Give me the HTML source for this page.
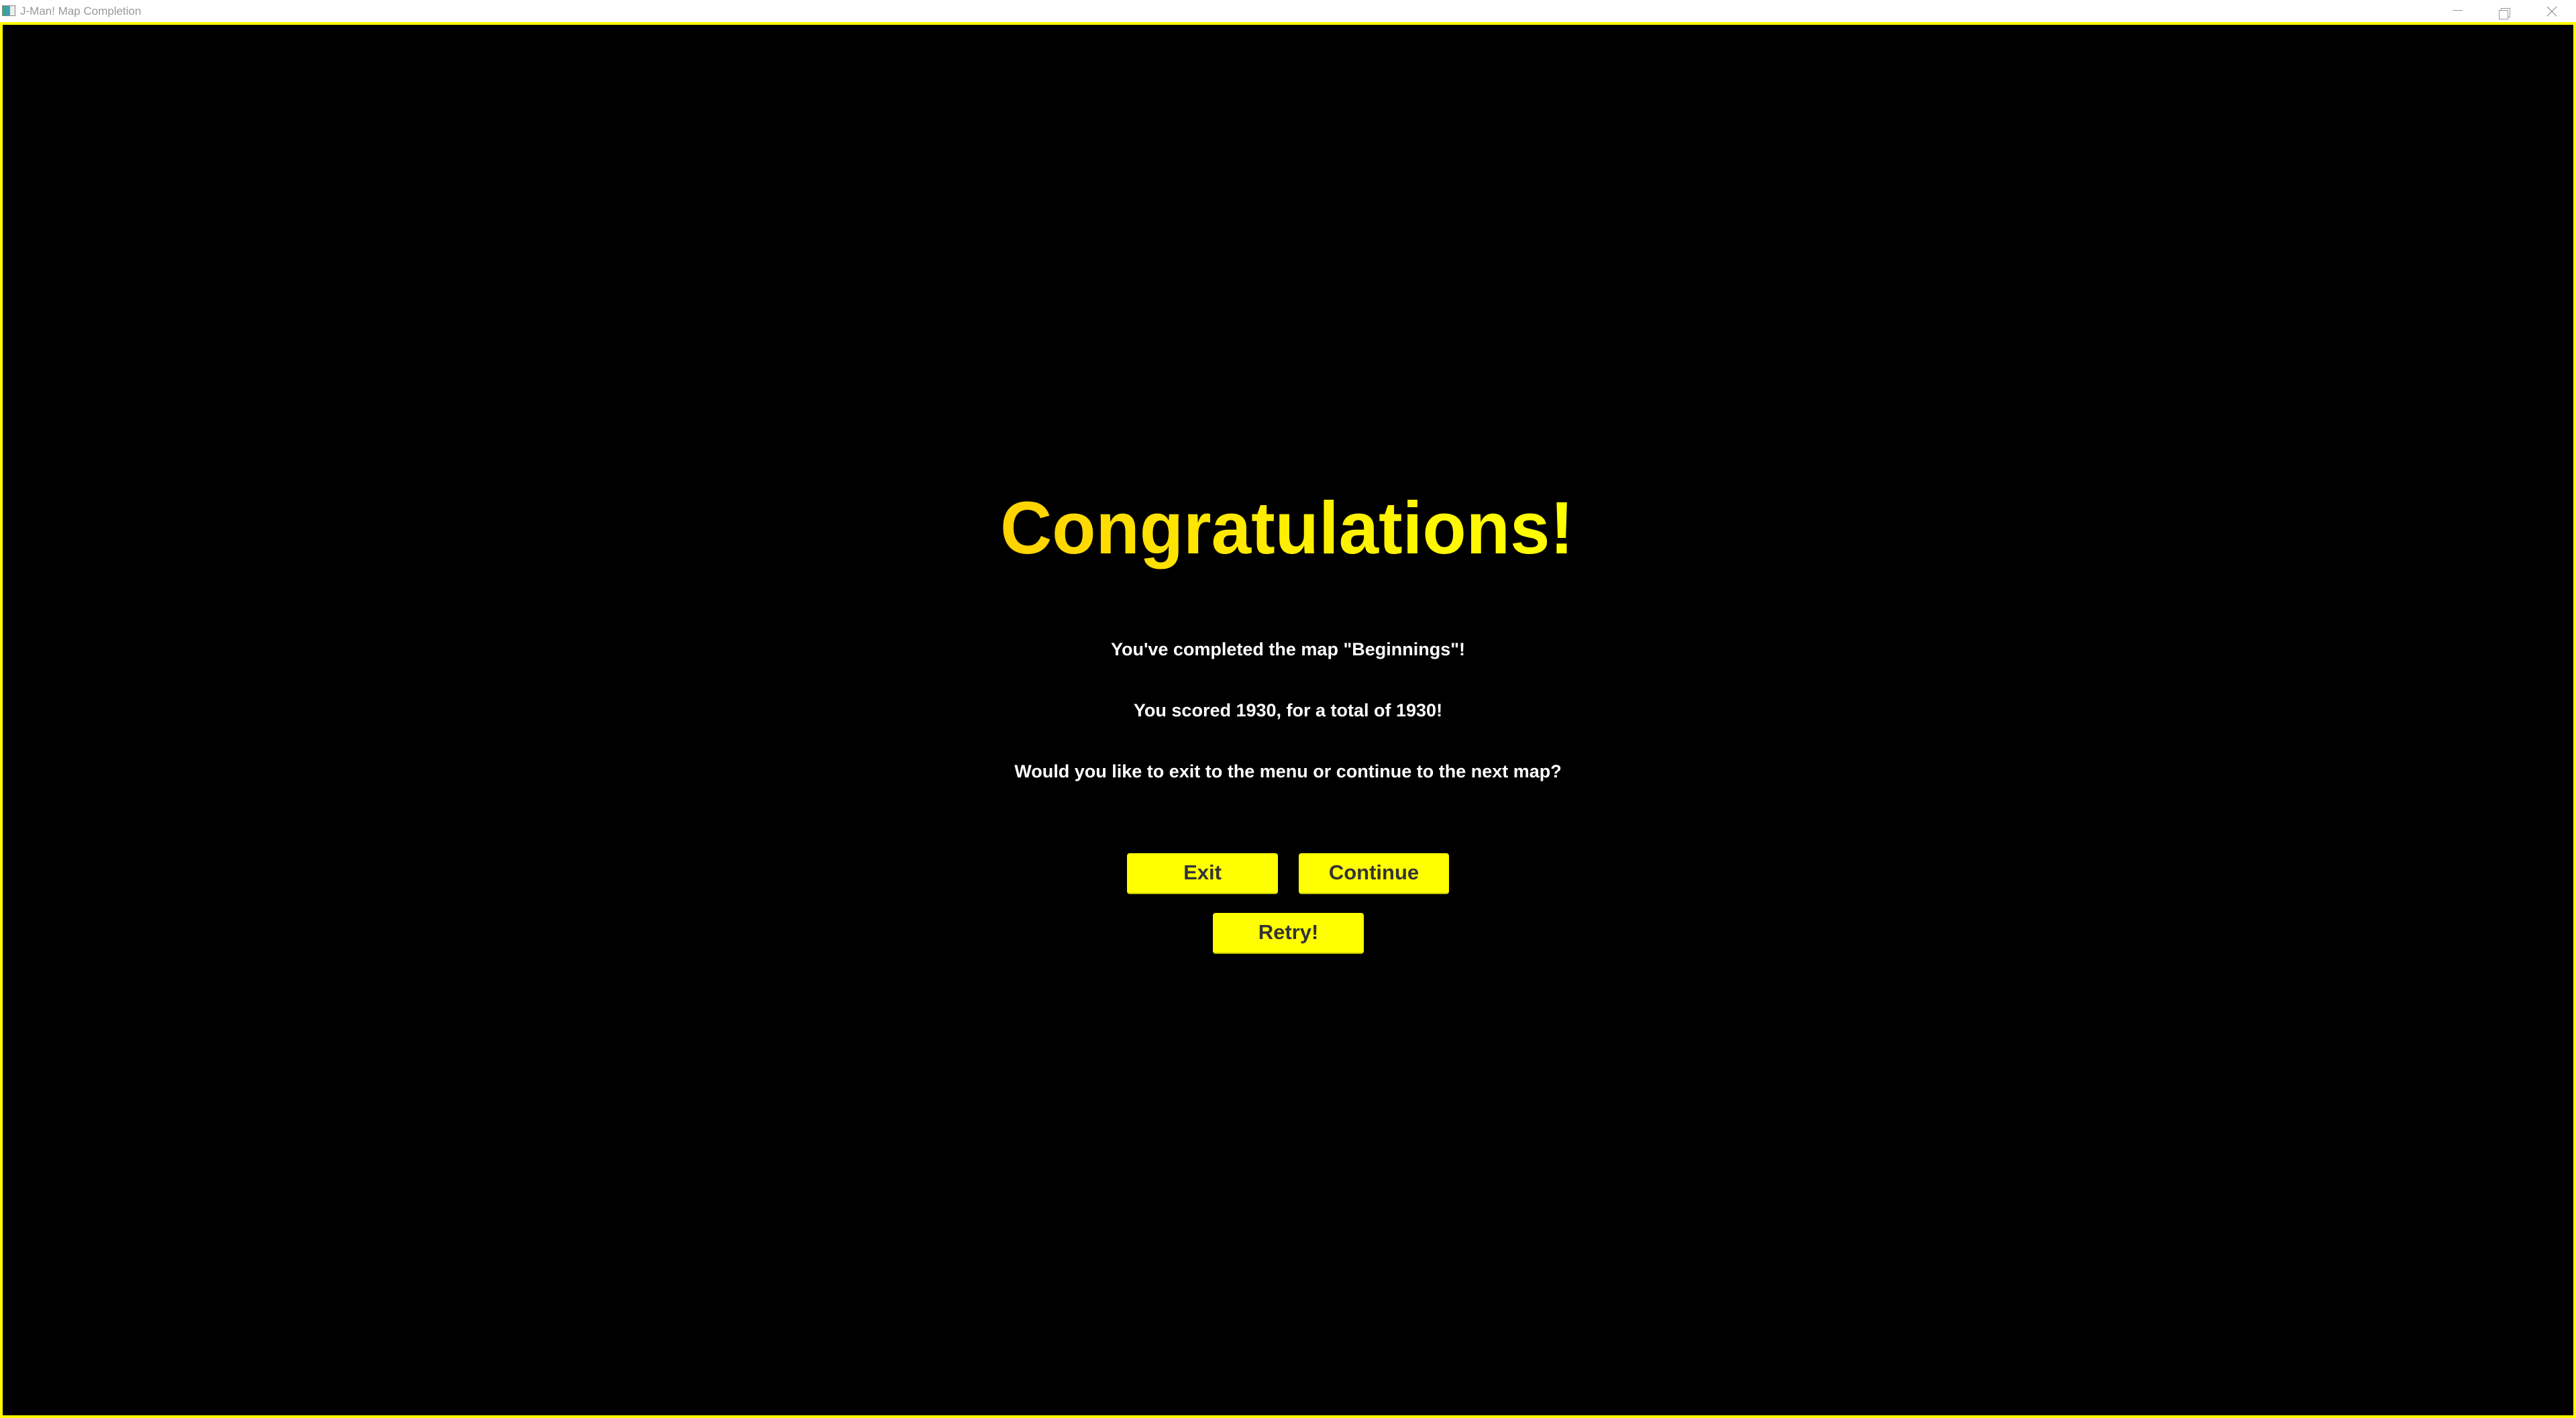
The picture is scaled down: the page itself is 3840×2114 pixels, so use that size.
<!DOCTYPE html>
<html><head><meta charset="utf-8"><style>
html,body{margin:0;padding:0;}
body{width:3840px;height:2114px;position:relative;background:#fff;overflow:hidden;font-family:"Liberation Sans",Arial,sans-serif;}
.title{position:absolute;left:30px;top:7px;font-size:17px;color:#999;font-family:"Liberation Sans",sans-serif;}
.ico{position:absolute;left:3px;top:8px;width:18px;height:14px;border:1px solid #888;background:linear-gradient(90deg,#3a7 0,#49c 60%,#eee 60%);}
.frame{position:absolute;left:0;top:33px;width:3840px;height:2081px;box-sizing:border-box;border:4px solid #ffff00;background:#000;}
.t{position:absolute;left:0;width:3840px;text-align:center;font-weight:bold;white-space:nowrap;}
.w{color:#fff;font-size:27px;}
.btn{position:absolute;background:#ffff00;border-radius:4px;border-bottom:2px solid #c8c800;box-sizing:border-box;color:#333;font-weight:bold;font-size:31px;text-align:center;line-height:58px;}
.ctl{position:absolute;top:0;height:33px;color:#999;}
</style></head><body>
<div class="ico"></div>
<div class="title">J-Man! Map Completion</div>
<div class="ctl" style="left:3656px;top:15px;width:15px;height:1px;background:#999"></div>
<div class="ctl" style="left:3728px;top:12px;width:12px;height:12px;border:1px solid #999;background:#fff"></div>
<div class="ctl" style="left:3725px;top:15px;width:12px;height:12px;border:1px solid #999;background:#fff"></div>
<svg style="position:absolute;left:3796px;top:9px" width="16" height="16"><path d="M1 1L15 15M15 1L1 15" stroke="#999" stroke-width="1.3"/></svg>
<div class="frame"></div>
<svg style="position:absolute;left:0;top:0" width="3840" height="1000">
<defs><linearGradient id="g" x1="1491" x2="2346" y1="0" y2="0" gradientUnits="userSpaceOnUse"><stop offset="0" stop-color="#ffd200"/><stop offset="0.5" stop-color="#ffee00"/><stop offset="1" stop-color="#ffff00"/></linearGradient></defs>
<text x="1491" y="825" textLength="855" lengthAdjust="spacingAndGlyphs" font-family="Liberation Sans, Arial, sans-serif" font-weight="bold" font-size="110" fill="url(#g)">Congratulations!</text>
</svg>
<div class="t w" style="top:950px;line-height:36px">You've completed the map "Beginnings"!</div>
<div class="t w" style="top:1041px;line-height:36px">You scored 1930, for a total of 1930!</div>
<div class="t w" style="top:1132px;line-height:36px">Would you like to exit to the menu or continue to the next map?</div>
<div class="btn" style="left:1680px;top:1272px;width:225px;height:61px">Exit</div>
<div class="btn" style="left:1936px;top:1272px;width:224px;height:61px">Continue</div>
<div class="btn" style="left:1808px;top:1361px;width:225px;height:61px">Retry!</div>
</body></html>
